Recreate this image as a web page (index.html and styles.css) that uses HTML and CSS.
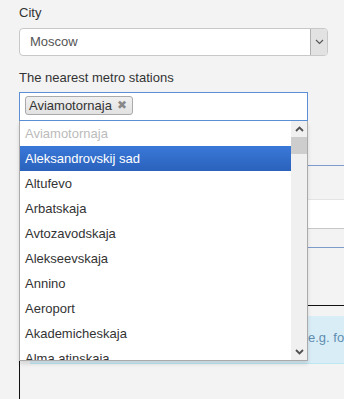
FILE: index.html
```html
<!DOCTYPE html>
<html>
<head>
<meta charset="utf-8">
<link rel="stylesheet" href="styles.css">
</head>
<body>
<div class="form">
  <div class="lbl">City</div>
  <div class="select">
    <span class="select-val">Moscow</span>
    <span class="select-btn"><svg width="9" height="6" viewBox="0 0 9 6"><path d="M1 1 L4.5 4.5 L8 1" fill="none" stroke="#555" stroke-width="1.1"/></svg></span>
  </div>
  <div class="lbl lbl2">The nearest metro stations</div>
  <div class="multi">
    <div class="multi-input"><span class="tag">Aviamotornaja<span class="tag-x">✖</span></span></div>
    <div class="dropdown">
      <ul class="options">
        <li class="opt disabled">Aviamotornaja</li>
        <li class="opt active">Aleksandrovskij sad</li>
        <li class="opt">Altufevo</li>
        <li class="opt">Arbatskaja</li>
        <li class="opt">Avtozavodskaja</li>
        <li class="opt">Alekseevskaja</li>
        <li class="opt">Annino</li>
        <li class="opt">Aeroport</li>
        <li class="opt">Akademicheskaja</li>
        <li class="opt">Alma atinskaja</li>
      </ul>
      <div class="sbar">
        <div class="sbtn"><svg width="9" height="6" viewBox="0 0 9 6"><path d="M1 5 L4.5 1.5 L8 5" fill="none" stroke="#505050" stroke-width="1.8"/></svg></div>
        <div class="sthumb"></div>
        <div class="strack"></div>
        <div class="sbtn"><svg width="9" height="6" viewBox="0 0 9 6"><path d="M1 1 L4.5 4.5 L8 1" fill="none" stroke="#505050" stroke-width="1.8"/></svg></div>
      </div>
    </div>
  </div>
  <div class="bg">
    <div class="rule-blue rule1"></div>
    <div class="field-white"></div>
    <div class="rule-blue rule2"></div>
    <div class="box-black">
      <div class="alert">e.g. for example</div>
    </div>
  </div>
</div>
</body>
</html>
```

FILE: styles.css
```css
html, body {
  margin: 0;
  padding: 0;
  background: #f3f3f3;
  overflow: hidden;
}
body {
  font-family: "Liberation Sans", Arial, sans-serif;
  font-size: 13px;
  color: #333;
  width: 344px;
  height: 399px;
}
.form {
  padding: 5px 16px 0 19px;
}
.lbl {
  line-height: 16px;
  color: #333;
  margin-bottom: 7px;
}
.lbl2 {
  margin-top: 14px;
  margin-bottom: 6px;
}
.select {
  box-sizing: border-box;
  height: 28px;
  border: 1px solid #c8c8c8;
  border-radius: 4px;
  background: #fff;
  display: flex;
  align-items: stretch;
  overflow: hidden;
}
.select-val {
  flex: 1;
  padding-left: 10px;
  line-height: 26px;
  color: #555;
}
.select-btn {
  width: 16px;
  background: #e2e2e2;
  border-left: 1px solid #b0b0b0;
  display: flex;
  align-items: center;
  justify-content: center;
}
.multi {
  position: relative;
  width: 289px;
}
.multi-input {
  box-sizing: border-box;
  height: 29px;
  border: 1px solid #5b8fd6;
  background: #fff;
  padding: 3px 0 0 5px;
}
.tag {
  box-sizing: border-box;
  display: inline-flex;
  align-items: center;
  height: 19px;
  padding: 0 5px 0 3px;
  border: 1px solid #aaa;
  border-radius: 3px;
  background: linear-gradient(#f0f0f0, #e2e2e2);
  color: #333;
  line-height: 17px;
}
.tag-x {
  font-size: 12px;
  color: #888;
  margin-left: 5px;
}
.dropdown {
  position: absolute;
  left: 0;
  top: 29px;
  box-sizing: border-box;
  width: 289px;
  height: 240px;
  background: #fff;
  border: 1px solid #aaa;
  border-top: 0;
  display: flex;
  overflow: hidden;
  box-shadow: 0 3px 4px rgba(0,0,0,0.12);
  z-index: 2;
}
.options {
  list-style: none;
  margin: 0;
  padding: 0;
  flex: 1;
  overflow: hidden;
}
.opt {
  height: 25px;
  line-height: 25px;
  padding-left: 5px;
  color: #333;
  white-space: nowrap;
}
.opt.disabled {
  color: #bbb;
}
.opt.active {
  color: #fff;
  background: linear-gradient(#3a78d8, #2a62bc);
}
.sbar {
  width: 16px;
  background: #f0f0f0;
  display: flex;
  flex-direction: column;
}
.sbtn {
  height: 16px;
  display: flex;
  align-items: center;
  justify-content: center;
}
.sthumb {
  height: 17px;
  background: #cdcdcd;
}
.strack {
  flex: 1;
}
.bg {
  margin-right: -16px;
}
.rule-blue {
  height: 1px;
  background: #7d9ccc;
}
.rule1 {
  margin-top: 44px;
}
.field-white {
  margin-top: 33px;
  height: 28px;
  background: #fff;
  border-top: 1px solid #e4e4e4;
  border-bottom: 1px solid #c8c8c8;
}
.rule2 {
  margin-top: 18px;
}
.box-black {
  margin-top: 57px;
  border-top: 1px solid #111;
  border-left: 1px solid #111;
  padding: 10px 0 0 10px;
  height: 83px;
  box-sizing: content-box;
}
.alert {
  box-sizing: border-box;
  height: 48px;
  background: #d9edf7;
  border-bottom: 1px solid #bce8f1;
  padding: 14px 0 0 278px;
  line-height: 16px;
  color: #5f8db0;
  white-space: nowrap;
  overflow: hidden;
}
```
